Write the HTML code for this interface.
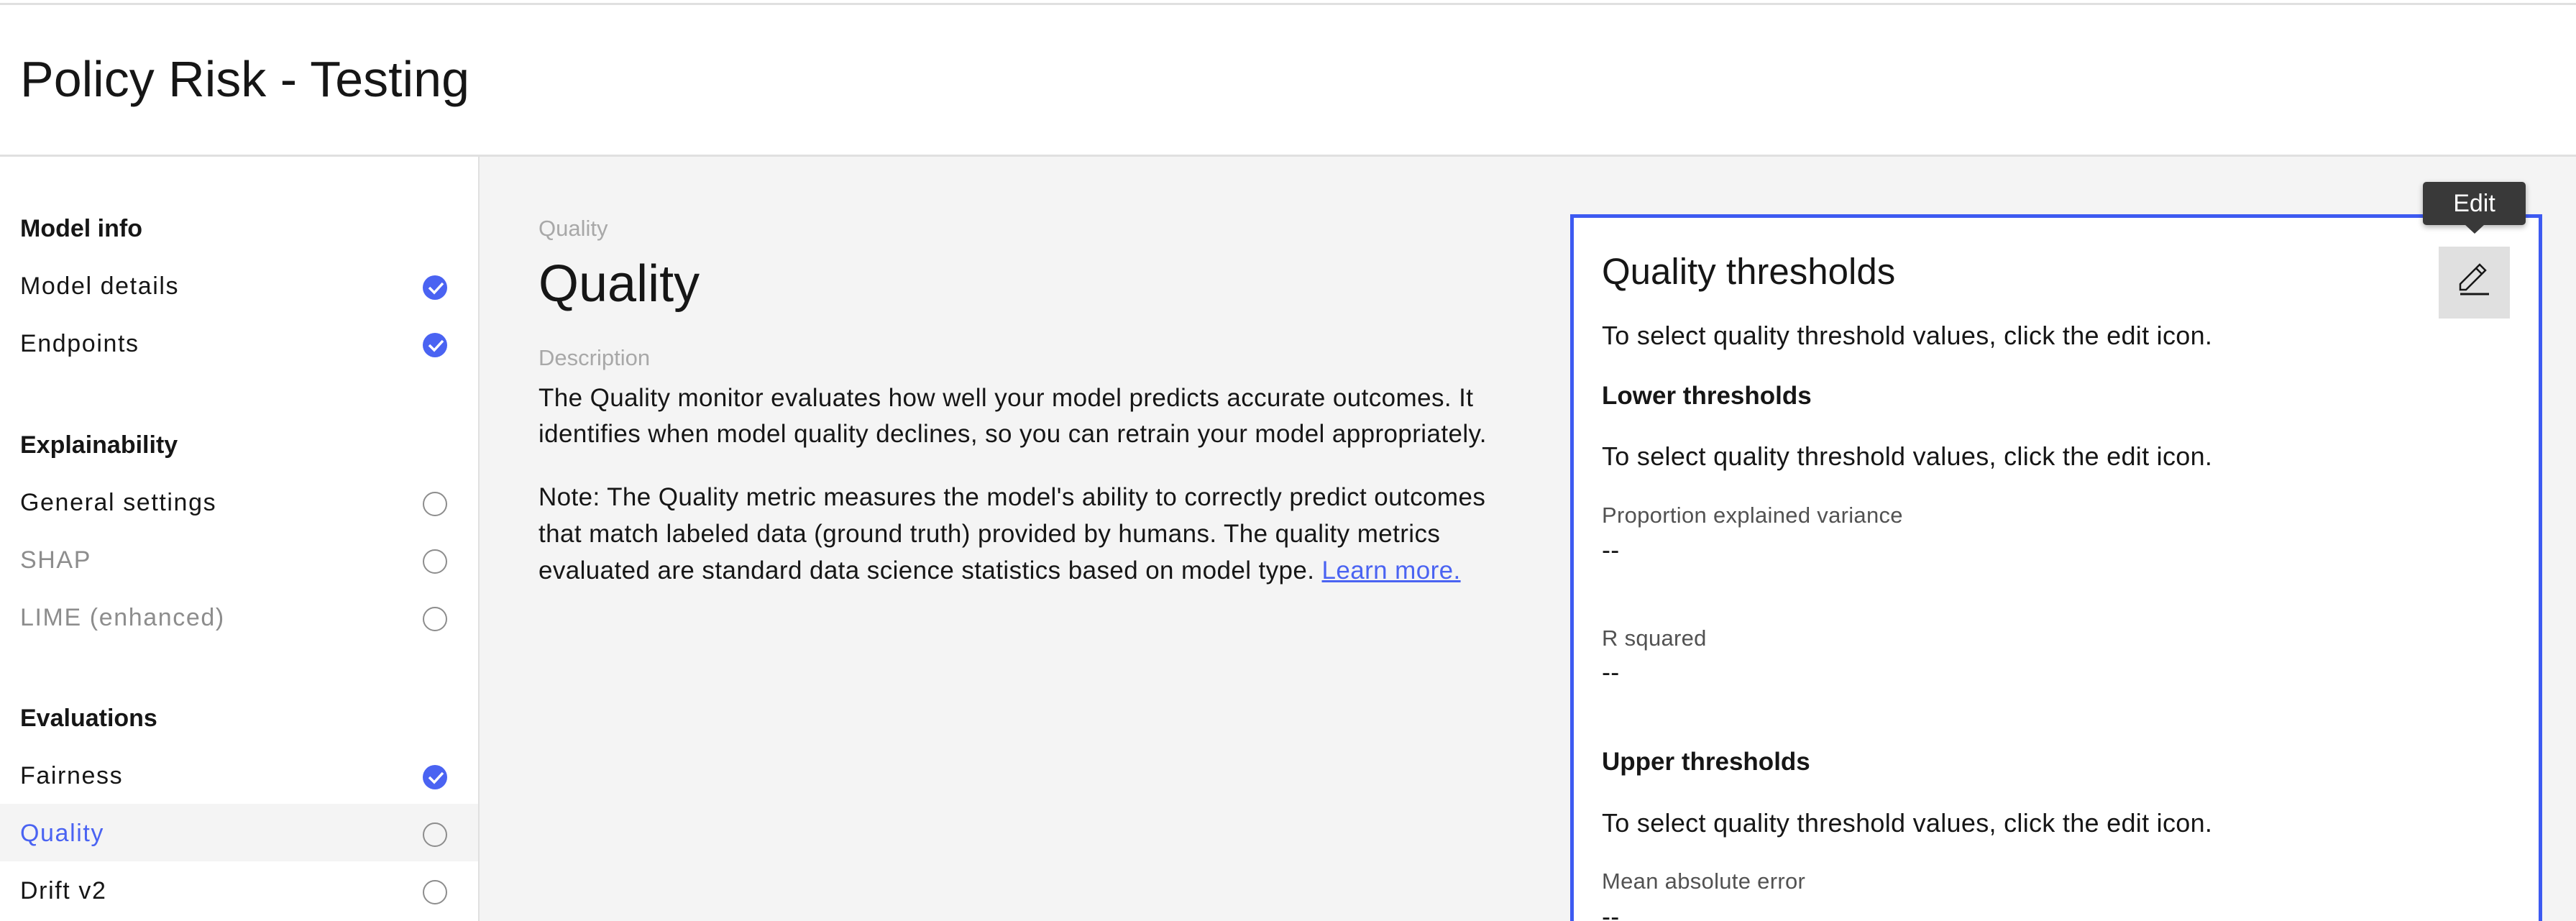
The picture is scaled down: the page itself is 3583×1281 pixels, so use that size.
<!DOCTYPE html>
<html><head><meta charset="utf-8"><style>
*{margin:0;padding:0;box-sizing:border-box}
html,body{width:3583px;height:1281px;overflow:hidden}
body{background:#fff;font-family:"Liberation Sans",sans-serif;color:#161616;position:relative}
.a{position:absolute;white-space:nowrap}
.s{font-size:34px;line-height:40px;letter-spacing:1.6px}
.ic{position:absolute;left:588px;width:34px;height:34px;border-radius:50%}
.chk{background:#4a63f2}
.emp{border:2.5px solid #8d8d8d}
.t{font-size:36px;line-height:40px;letter-spacing:0.3px}
.l{font-size:31px;line-height:34px;color:#525252;letter-spacing:0.3px}
</style></head><body>
<div class="a" style="left:0;top:4px;width:3583px;height:3px;background:#e0e0e0"></div>
<div class="a" style="left:28px;top:70px;font-size:70px;line-height:80px">Policy Risk - Testing</div>
<div class="a" style="left:0;top:215px;width:3583px;height:3px;background:#e0e0e0"></div>
<div class="a" style="left:665px;top:218px;width:2918px;height:1063px;background:#f4f4f4;border-left:2px solid #e0e0e0"></div>
<div class="a" style="left:0;top:1118px;width:665px;height:80px;background:#f4f4f4"></div>
<div class="a" style="left:28px;top:298px;font-size:34px;line-height:40px;font-weight:bold">Model info</div>
<div class="a s" style="left:28px;top:378px">Model details</div>
<div class="ic chk" style="top:383px"></div>
<div class="a s" style="left:28px;top:458px">Endpoints</div>
<div class="ic chk" style="top:463px"></div>
<div class="a" style="left:28px;top:599px;font-size:34px;line-height:40px;font-weight:bold">Explainability</div>
<div class="a s" style="left:28px;top:679px">General settings</div>
<div class="ic emp" style="top:684px"></div>
<div class="a s" style="left:28px;top:759px;color:#8d8d8d">SHAP</div>
<div class="ic emp" style="top:764px"></div>
<div class="a s" style="left:28px;top:839px;color:#8d8d8d">LIME (enhanced)</div>
<div class="ic emp" style="top:844px"></div>
<div class="a" style="left:28px;top:979px;font-size:34px;line-height:40px;font-weight:bold">Evaluations</div>
<div class="a s" style="left:28px;top:1059px">Fairness</div>
<div class="ic chk" style="top:1064px"></div>
<div class="a s" style="left:28px;top:1139px;color:#4a63f2">Quality</div>
<div class="ic emp" style="top:1144px"></div>
<div class="a s" style="left:28px;top:1219px">Drift v2</div>
<div class="ic emp" style="top:1224px"></div>
<svg class="a" style="left:0;top:0" width="700" height="1281">
<g fill="none" stroke="#fff" stroke-width="3.5">
<path d="M597 400l7 7 12-13"/><path d="M597 480l7 7 12-13"/><path d="M597 1081l7 7 12-13"/>
</g></svg>
<div class="a" style="left:749px;top:301px;font-size:31px;line-height:34px;color:#a8a8a8">Quality</div>
<div class="a" style="left:749px;top:355px;font-size:72px;line-height:80px">Quality</div>
<div class="a" style="left:749px;top:481px;font-size:31px;line-height:34px;color:#a8a8a8">Description</div>
<div class="a" style="left:749px;top:529px;font-size:35px;line-height:50px;letter-spacing:0.4px">The Quality monitor evaluates how well your model predicts accurate outcomes. It<br>identifies when model quality declines, so you can retrain your model appropriately.</div>
<div class="a" style="left:749px;top:666px;font-size:35px;line-height:51px;letter-spacing:0.4px">Note: The Quality metric measures the model's ability to correctly predict outcomes<br>that match labeled data (ground truth) provided by humans. The quality metrics<br>evaluated are standard data science statistics based on model type. <span style="color:#4a63f2;text-decoration:underline">Learn more.</span></div>
<div class="a" style="left:2184px;top:298px;width:1352px;height:1000px;background:#fff;border:5px solid #3d5af1;border-bottom:none"></div>
<div class="a" style="left:2228px;top:348px;font-size:51px;line-height:60px">Quality thresholds</div>
<div class="a t" style="left:2228px;top:447px">To select quality threshold values, click the edit icon.</div>
<div class="a" style="left:2228px;top:531px;font-size:35px;line-height:40px;font-weight:bold">Lower thresholds</div>
<div class="a t" style="left:2228px;top:615px">To select quality threshold values, click the edit icon.</div>
<div class="a l" style="left:2228px;top:700px">Proportion explained variance</div>
<div class="a t" style="left:2228px;top:745px">--</div>
<div class="a l" style="left:2228px;top:871px">R squared</div>
<div class="a t" style="left:2228px;top:915px">--</div>
<div class="a" style="left:2228px;top:1040px;font-size:35px;line-height:40px;font-weight:bold">Upper thresholds</div>
<div class="a t" style="left:2228px;top:1125px">To select quality threshold values, click the edit icon.</div>
<div class="a l" style="left:2228px;top:1209px">Mean absolute error</div>
<div class="a t" style="left:2228px;top:1255px">--</div>
<div class="a" style="left:3392px;top:343px;width:99px;height:100px;background:#e0e0e0"></div>
<svg class="a" style="left:3392px;top:343px" width="99" height="100">
<path d="M30 52l27-27 8 8-27 27h-8z M52 30l8 8" fill="none" stroke="#161616" stroke-width="2.5"/>
<path d="M30 66h40" stroke="#161616" stroke-width="3"/>
</svg>
<div class="a" style="left:3370px;top:253px;width:143px;height:60px;background:#393939;border-radius:5px;box-shadow:0 3px 8px rgba(0,0,0,.3);color:#fff;font-size:34px;line-height:60px;text-align:center">Edit</div>
<svg class="a" style="left:3428px;top:312px" width="30" height="14"><path d="M0 0h28L14 13z" fill="#393939"/></svg>
</body></html>
